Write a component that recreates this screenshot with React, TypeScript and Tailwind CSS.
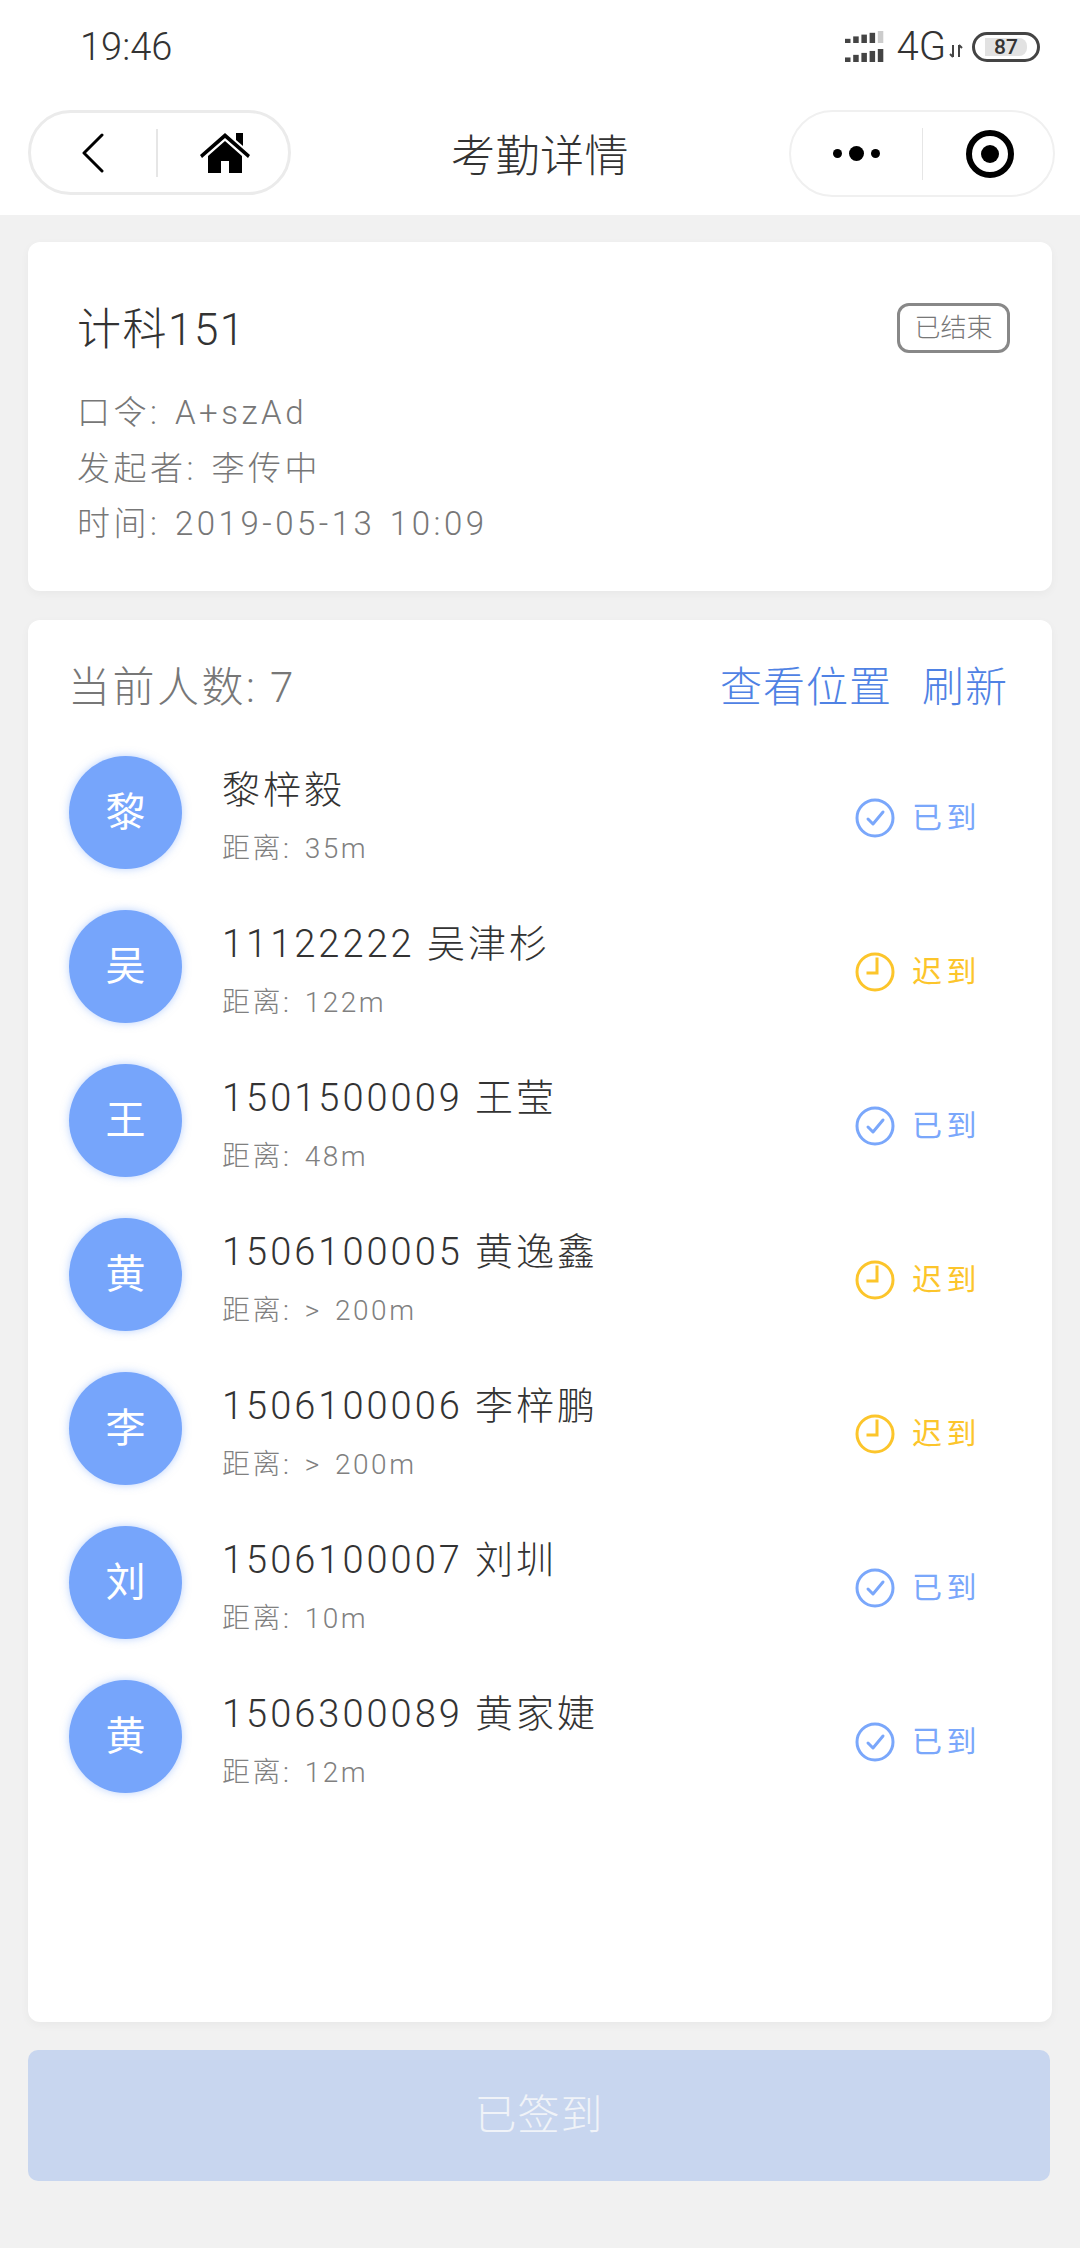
const FONT = "font-['Roboto','Noto_Sans_CJK_SC',sans-serif]";

type Row = { initial: string; name: string; distance: string; late: boolean };

const rows: Row[] = [
  { initial: "黎", name: "黎梓毅", distance: "距离: 35m", late: false },
  { initial: "吴", name: "11122222 吴津杉", distance: "距离: 122m", late: true },
  { initial: "王", name: "1501500009 王莹", distance: "距离: 48m", late: false },
  { initial: "黄", name: "1506100005 黄逸鑫", distance: "距离: > 200m", late: true },
  { initial: "李", name: "1506100006 李梓鹏", distance: "距离: > 200m", late: true },
  { initial: "刘", name: "1506100007 刘圳", distance: "距离: 10m", late: false },
  { initial: "黄", name: "1506300089 黄家婕", distance: "距离: 12m", late: false },
];

function SignalIcon() {
  const heights = [7, 11, 14, 17, 20];
  return (
    <svg width="40" height="32" viewBox="0 0 40 32" className="text-[#444]">
      {heights.map((h, i) => (
        <rect key={i} x={i * 8.2} y={12 - h * 0.6} width="5.5" height={h * 0.6} fill={i === 4 ? "#ccc" : "currentColor"} />
      ))}
      {heights.map((h, i) => (
        <rect key={i} x={i * 8.2} y={31 - h * 0.65} width="5.5" height={h * 0.65} fill="currentColor" />
      ))}
    </svg>
  );
}

function Battery() {
  return (
    <div className="flex h-[30px] w-[68px] items-center rounded-[15px] border-[3px] border-[#444] px-[10px]">
      <div className="flex h-[18px] w-[49px] items-center justify-center rounded-r-[8px] bg-[#e2e2e2] text-[21px] font-medium leading-none text-[#333]">
        87
      </div>
    </div>
  );
}

function StatusBar() {
  return (
    <div className="flex h-[92px] items-center justify-between pl-[80px] pr-[40px] pt-[2px] text-[#333]">
      <span className="text-[38px] font-light leading-none">19:46</span>
      <div className="flex items-center">
        <SignalIcon />
        <span className="ml-[11px] text-[40px] font-light leading-none">4G</span>
        <svg width="14" height="14" viewBox="0 0 14 14" className="ml-[3px] mt-[8px] text-[#444]">
          <path d="M4 1v12M1 10l3 3M10 13V1M10 1l3 3" stroke="currentColor" strokeWidth="2" fill="none" />
        </svg>
        <div className="ml-[9px]">
          <Battery />
        </div>
      </div>
    </div>
  );
}

function NavBar() {
  return (
    <div className="flex h-[123px] items-start justify-between pl-[28px] pr-[25px] pt-[18px]">
      <div className="flex h-[85px] w-[263px] items-center rounded-[43px] border-[3px] border-[#ebebeb]">
        <div className="flex w-[125px] justify-center pr-[3px]">
          <svg width="24" height="40" viewBox="0 0 24 40" fill="none" stroke="#000" strokeWidth="3" strokeLinecap="round" strokeLinejoin="round">
            <path d="M22 2 4 20l18 18" />
          </svg>
        </div>
        <div className="h-[48px] w-[2px] bg-[#e6e6e6]" />
        <div className="flex flex-1 justify-center pl-[4px]">
          <svg width="50" height="40" viewBox="0 0 50 40" fill="#000">
            <path d="M36 0h7v13l-7-6z" />
            <path d="M25 0 50 22l-2 3L25 5 2 25l-2-3z" />
            <path d="M25 8 8 23v17h13V28h8v12h13V23z" />
          </svg>
        </div>
      </div>
      <span className="mt-[22px] text-[44px] font-light leading-[50px] tracking-[0.5px] text-[#333]">考勤详情</span>
      <div className="flex h-[87px] w-[266px] items-center rounded-[44px] border-2 border-[#f0f0f0]">
        <div className="flex w-[131px] items-center justify-center gap-[7px]">
          <div className="h-[9px] w-[9px] rounded-full bg-black" />
          <div className="h-[15px] w-[15px] rounded-full bg-black" />
          <div className="h-[9px] w-[9px] rounded-full bg-black" />
        </div>
        <div className="h-[52px] w-px bg-[#e6e6e6]" />
        <div className="flex flex-1 justify-center pl-[3px]">
          <div className="flex h-[48px] w-[48px] items-center justify-center rounded-full border-[6px] border-black">
            <div className="h-[18px] w-[18px] rounded-full bg-black" />
          </div>
        </div>
      </div>
    </div>
  );
}

function InfoCard() {
  return (
    <div className="mx-[28px] mt-[27px] h-[349px] rounded-[12px] bg-white px-[49px] pt-[60px] shadow-[0_3px_10px_rgba(0,0,0,0.04)]">
      <div className="flex items-start justify-between">
        <span className="text-[44px] font-light leading-[56px] tracking-[1.5px] text-[#333]">计科151</span>
        <span className="mr-[-7px] mt-[1px] flex h-[50px] w-[113px] items-center justify-center rounded-[12px] border-[3px] border-[#888] text-[26px] font-light text-[#777]">
          已结束
        </span>
      </div>
      <div className="mt-[27px] flex flex-col text-[33px] font-light leading-[55.5px] tracking-[3.5px] text-[#777] [word-spacing:3px]">
        <span>口令: A+szAd</span>
        <span>发起者: 李传中</span>
        <span>时间: 2019-05-13 10:09</span>
      </div>
    </div>
  );
}

function StatusBadge({ late }: { late: boolean }) {
  const color = late ? "text-[#fcc52b]" : "text-[#7aa7fb]";
  return (
    <div className={`flex items-center ${color}`}>
      <svg width="40" height="40" viewBox="0 0 40 40" fill="none" stroke="currentColor" strokeWidth="3" strokeLinecap="round" strokeLinejoin="round">
        <circle cx="20" cy="20" r="18" />
        {late ? <path d="M22 7v14h-9" strokeLinecap="square" strokeLinejoin="miter" /> : <path d="M13 21l5 5 10-12" />}
      </svg>
      <span className="ml-[17px] text-[30px] leading-none tracking-[4.5px]">{late ? "迟到" : "已到"}</span>
    </div>
  );
}

function PersonRow({ row }: { row: Row }) {
  return (
    <div className="flex h-[154px] items-start pl-[41px] pr-[67px]">
      <div className="flex h-[113px] w-[113px] shrink-0 items-center justify-center rounded-full bg-[#76a5fb] text-[40px] text-white shadow-[0_0_8px_rgba(118,165,251,0.5)]">
        {row.initial}
      </div>
      <div className="ml-[40px] flex flex-1 flex-col pt-[9px]">
        <span className="text-[38px] font-light leading-[50px] tracking-[3px] text-[#333]">{row.name}</span>
        <span className="mt-[14px] text-[28px] font-light leading-[40px] tracking-[2.5px] text-[#808080] [word-spacing:4px]">{row.distance}</span>
      </div>
      <div className="mt-[42px] w-[130px]">
        <StatusBadge late={row.late} />
      </div>
    </div>
  );
}

function ListCard() {
  return (
    <div className="mx-[28px] mt-[29px] flex h-[1402px] flex-col rounded-[12px] bg-white pt-[38px] shadow-[0_3px_10px_rgba(0,0,0,0.04)]">
      <div className="flex h-[58px] items-center justify-between pl-[40px] pr-[44px]">
        <span className="text-[42px] font-light tracking-[2.5px] text-[#777]">当前人数: 7</span>
        <div className="flex gap-[30px] text-[42px] font-light tracking-[1px] text-[#4f82e4]">
          <span>查看位置</span>
          <span>刷新</span>
        </div>
      </div>
      <div className="mt-[40px] flex flex-col">
        {rows.map((row, i) => (
          <PersonRow key={i} row={row} />
        ))}
      </div>
    </div>
  );
}

export default function App() {
  return (
    <div className={`${FONT} h-[2248px] w-[1080px] overflow-hidden bg-[#f1f1f1]`}>
      <div className="bg-white">
        <StatusBar />
        <NavBar />
      </div>
      <InfoCard />
      <ListCard />
      <div className="mx-[28px] mt-[28px] mr-[30px] flex h-[131px] items-center justify-center rounded-[10px] bg-[#c8d6ef] text-[42px] font-light tracking-[1px] text-[#f0f3f8]">
        已签到
      </div>
    </div>
  );
}
